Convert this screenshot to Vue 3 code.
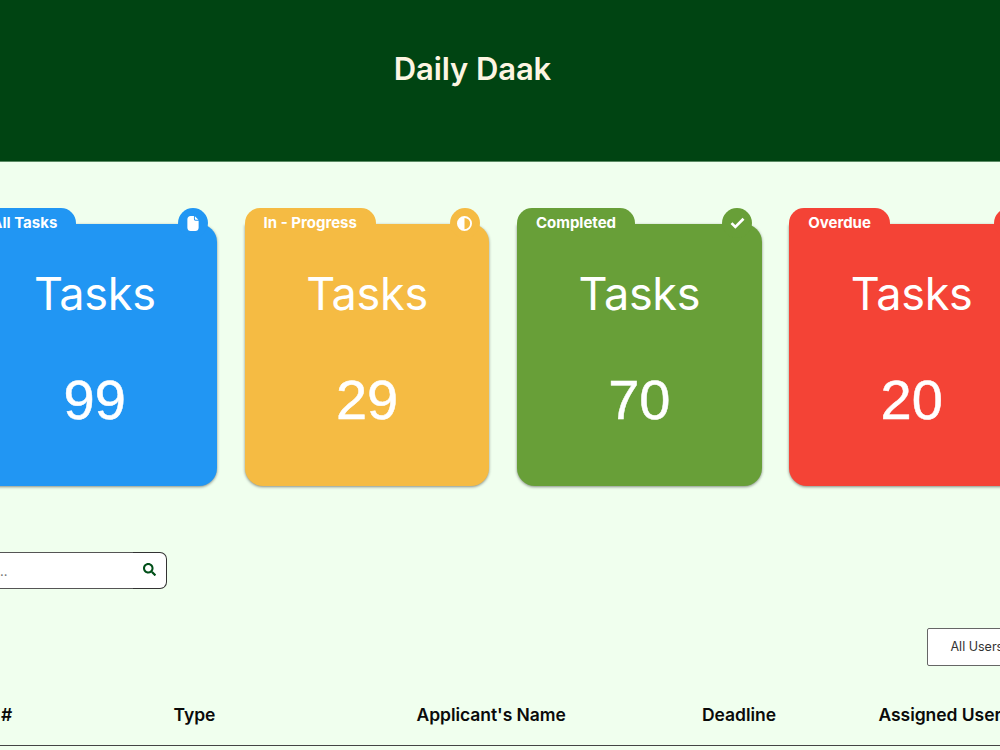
<template>
  <div class="page">
    <header class="header">
      <h1>Daily Daak</h1>
    </header>

    <div class="cards">
      <div v-for="card in cards" :key="card.label" class="card" :class="card.color">
        <div class="card-top">
          <span class="tab">{{ card.label }}</span>
          <span class="badge">
            <svg v-if="card.icon === 'file'" class="icon-file" viewBox="0 0 12 16">
              <path d="M3.5 0H7v3.3c0 1 .6 1.7 1.7 1.7H12v7.5c0 2.1-1.4 3.5-3.5 3.5h-5C1.4 16 0 14.6 0 12.5v-9C0 1.4 1.4 0 3.5 0z" />
              <path d="M8 .3 11.7 4H9c-.7 0-1-.3-1-1z" />
            </svg>
            <svg v-else-if="card.icon === 'half'" class="icon-half" viewBox="0 0 16 16">
              <path fill-rule="evenodd" d="M8 0a8 8 0 1 0 0 16A8 8 0 0 0 8 0zm0 2a6 6 0 0 1 0 12z" />
            </svg>
            <svg v-else class="icon-check" viewBox="0 0 14 11">
              <path class="check-line" d="M1.4 5.6 5 9.2l7.6-7.6" />
            </svg>
          </span>
        </div>
        <div class="card-body">
          <p class="card-title">Tasks</p>
          <p class="card-count">{{ card.count }}</p>
        </div>
      </div>
    </div>

    <div class="search">
      <input type="text" placeholder="Search..." />
      <button>
        <svg viewBox="0 0 512 512">
          <path d="M505 442.7 405.3 343c-4.5-4.5-10.6-7-17-7H372c27.6-35.3 44-79.7 44-128C416 93.1 322.9 0 208 0S0 93.1 0 208s93.1 208 208 208c48.3 0 92.7-16.4 128-44v16.3c0 6.4 2.5 12.5 7 17l99.7 99.7c9.4 9.4 24.6 9.4 33.9 0l28.3-28.3c9.4-9.4 9.4-24.6.1-34zM208 336c-70.7 0-128-57.2-128-128 0-70.7 57.2-128 128-128 70.7 0 128 57.2 128 128 0 70.7-57.2 128-128 128z" />
        </svg>
      </button>
    </div>

    <div class="filters">
      <button class="user-filter">All Users</button>
    </div>

    <div class="table-head">
      <span v-for="column in columns" :key="column">{{ column }}</span>
    </div>
  </div>
</template>

<script setup>
const cards = [
  { label: 'All Tasks', count: 99, color: 'blue', icon: 'file' },
  { label: 'In - Progress', count: 29, color: 'yellow', icon: 'half' },
  { label: 'Completed', count: 70, color: 'green', icon: 'check' },
  { label: 'Overdue', count: 20, color: 'red', icon: 'clock' }
]

const columns = ['#', 'Type', "Applicant's Name", 'Deadline', 'Assigned User']
</script>

<style>
body {
  background: #f0ffee;
}
</style>

<style scoped>
.page {
  height: 750px;
  overflow: hidden;
  background: #f0ffee;
  font-family: Inter, 'Liberation Sans', sans-serif;
}

.header {
  height: 162px;
  box-sizing: border-box;
  padding: 49px 55px 0 0;
  background: #004412;
  border-bottom: 1px solid #5b8a64;
}

h1 {
  margin: 0;
  color: #fdf5e2;
  font-size: 31px;
  font-weight: 600;
  line-height: 39px;
  letter-spacing: -0.1px;
  text-align: center;
}

.cards {
  display: flex;
  gap: 27.8px;
  margin: 46.4px 0 0 -27.5px;
}

.card {
  flex: 0 0 244.5px;
  color: #fff;
}

.card-top {
  display: flex;
  justify-content: space-between;
  height: 16px;
  padding-right: 9.5px;
}

.tab {
  position: relative;
  height: 32px;
  box-sizing: border-box;
  padding: 0 18.8px;
  border-radius: 15px 15px 0 0;
  background: var(--color);
  font-size: 15px;
  font-weight: 750;
  line-height: 29px;
  white-space: nowrap;
  z-index: 1;
}

.badge {
  position: relative;
  display: flex;
  align-items: center;
  justify-content: center;
  width: 30px;
  height: 30px;
  border-radius: 50%;
  background: var(--color);
  z-index: 1;
}

.badge svg {
  fill: #fff;
}

.icon-file {
  width: 12px;
  height: 15px;
}

.icon-half {
  width: 15px;
  height: 15px;
}

.icon-check {
  width: 15px;
  height: 12px;
}

.check-line {
  fill: none;
  stroke: #fff;
  stroke-width: 2.5;
}

.card-body {
  height: 262px;
  border-radius: 0 18px 18px 18px;
  background: var(--color);
  box-shadow: 0 1px 3px rgba(0, 0, 0, 0.45);
  text-align: center;
}

.blue {
  --color: #2196f3;
}

.yellow {
  --color: #f5bb43;
}

.green {
  --color: #689f38;
}

.red {
  --color: #f44336;
}

.card-title {
  margin: 0;
  padding-top: 41px;
  font-size: 45px;
  font-weight: 400;
  line-height: 58px;
  letter-spacing: -0.3px;
}

.card-count {
  margin: 0;
  padding-top: 45px;
  font-family: 'Liberation Sans', Arial, sans-serif;
  font-size: 56px;
  line-height: 64px;
  -webkit-text-stroke: 0.5px #fff;
}

.search {
  display: flex;
  width: 216.5px;
  height: 37px;
  margin: 65.6px 0 0 -50px;
}

.search input {
  flex: 1;
  min-width: 0;
  box-sizing: border-box;
  padding: 1px 0 0 2px;
  border: 1px solid #555;
  border-right: none;
  background: #fff;
  font-family: inherit;
  font-size: 13px;
  outline: none;
}

.search button {
  width: 34px;
  box-sizing: border-box;
  padding: 1px 0 0;
  border: 1px solid #333;
  border-left: none;
  border-radius: 0 7px 7px 0;
  background: #fff;
}

.search svg {
  width: 13px;
  height: 13px;
  fill: #004f18;
}

.filters {
  display: flex;
  margin: 39px 0 0 927px;
}

.user-filter {
  flex: 0 0 130px;
  height: 38px;
  box-sizing: border-box;
  padding: 0 0 0 22.5px;
  border: 1px solid #666;
  border-radius: 2px;
  background: #fff;
  color: #333;
  font-family: inherit;
  font-size: 12.5px;
  text-align: left;
}

.table-head {
  display: grid;
  grid-template-columns: 172.5px 243px 285.5px 176.5px 150px;
  height: 80px;
  box-sizing: border-box;
  padding: 38px 0 0 1px;
  border-bottom: 1px solid #444;
  color: #0a0a0a;
  font-size: 17.5px;
  font-weight: 630;
  letter-spacing: -0.05px;
  line-height: 22px;
  white-space: nowrap;
}
</style>
